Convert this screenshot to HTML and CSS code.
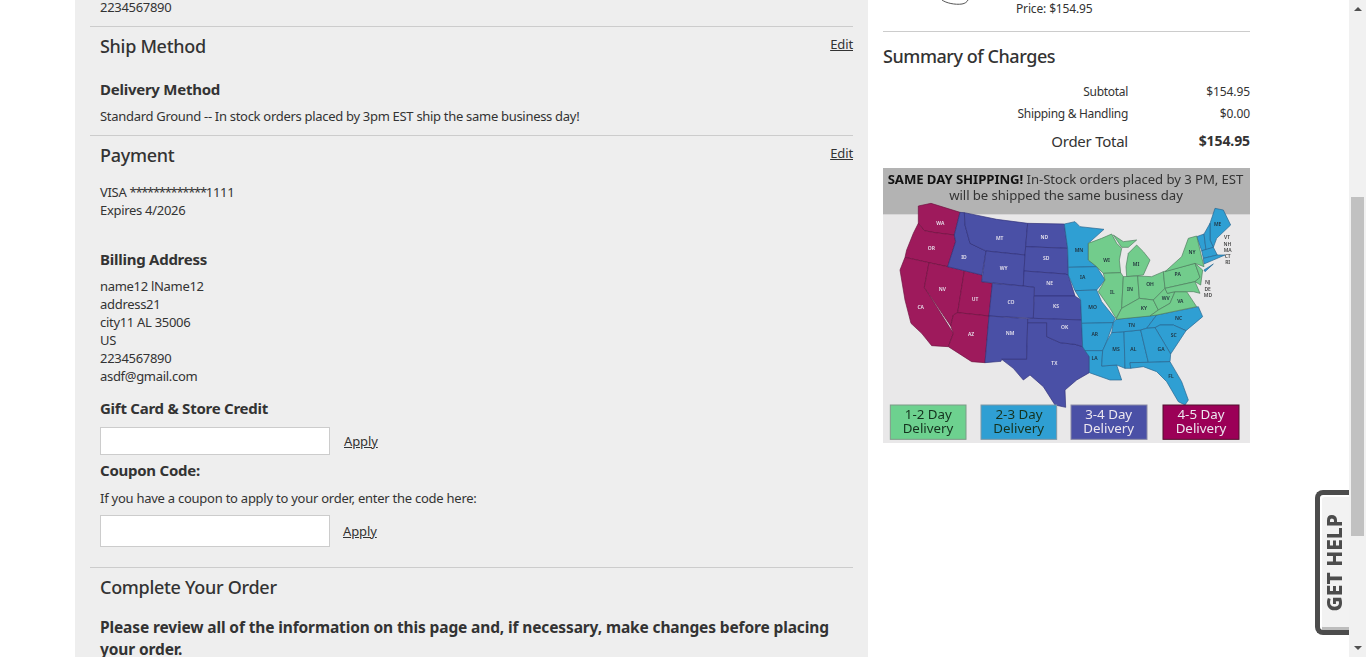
FILE: index.html
```html
<!DOCTYPE html>
<html lang="en">
<head>
<meta charset="utf-8">
<title>Checkout Review</title>
<link rel="stylesheet" href="styles.css">
</head>
<body>
<div class="page">
  <main class="panel">
    <section class="block block-first">
      <p class="line phone-cut">2234567890</p>
    </section>
    <section class="block">
      <div class="head"><h2>Ship Method</h2><a class="edit" href="#">Edit</a></div>
      <h3 class="sub-delivery">Delivery Method</h3>
      <p class="line ship-text">Standard Ground -- In stock orders placed by 3pm EST ship the same business day!</p>
    </section>
    <section class="block">
      <div class="head"><h2>Payment</h2><a class="edit" href="#">Edit</a></div>
      <div class="card-lines">
        <p class="line">VISA <span class="mask">*************</span>1111</p>
        <p class="line">Expires 4/2026</p>
      </div>
      <h3 class="sub-billing">Billing Address</h3>
      <div class="address">
        <p class="line">name12 lName12</p>
        <p class="line">address21</p>
        <p class="line">city11 AL 35006</p>
        <p class="line">US</p>
        <p class="line">2234567890</p>
        <p class="line">asdf@gmail.com</p>
      </div>
      <h3 class="sub-gift">Gift Card &amp; Store Credit</h3>
      <div class="apply-row row-gift"><input class="field" type="text" aria-label="Gift card"><a class="apply" href="#">Apply</a></div>
      <h3 class="sub-coupon">Coupon Code:</h3>
      <p class="line coupon-hint">If you have a coupon to apply to your order, enter the code here:</p>
      <div class="apply-row row-coupon"><input class="field field-tall" type="text" aria-label="Coupon code"><a class="apply" href="#">Apply</a></div>
    </section>
    <section class="block">
      <div class="head head-complete"><h2>Complete Your Order</h2></div>
      <p class="review">Please review all of the information on this page and, if necessary, make changes before placing your order.</p>
    </section>
  </main>

  <aside class="side">
    <div class="product-cut">
      <svg class="product-arc" width="30" height="6" viewBox="0 0 30 6"><path d="M1 0C5 3 14 5 21 4C24 3.500 26 2 27 0" fill="none" stroke="#555" stroke-width="1"/></svg>
      <p class="price">Price: $154.95</p>
    </div>
    <h2 class="summary-title">Summary of Charges</h2>
    <div class="charge"><span class="c-label">Subtotal</span><span class="c-val">$154.95</span></div>
    <div class="charge"><span class="c-label">Shipping &amp; Handling</span><span class="c-val">$0.00</span></div>
    <div class="charge total"><span class="c-label">Order Total</span><span class="c-val">$154.95</span></div>

    <svg class="map" viewBox="9 24 1101 825" width="367" height="275" role="img" aria-label="Same day shipping delivery map">
      <rect class="m-bg" x="9" y="24" width="1101" height="825"/>
      <rect class="m-band" x="9" y="24" width="1101" height="139"/>
      <text class="m-head" x="23" y="73"><tspan class="m-strong">SAME DAY SHIPPING!</tspan> In-Stock orders placed by 3 PM, EST</text>
      <text class="m-head" x="558" y="121" text-anchor="middle">will be shipped the same business day</text>

      <g class="s-red">
        <path d="M115 138L153 130L240 157L223 225L165 218L133 212L115 190Z"/>
        <path d="M115 190L133 212L165 218L223 225L227 245L203 320L147 308L75 292L80 270L100 220Z"/>
        <path d="M75 292L147 308L133 382L220 520L205 560L155 557L125 520L93 490L75 420L60 330Z"/>
        <path d="M147 308L203 320L253 332L233 458L220 465L212 498L133 382Z"/>
        <path d="M253 332L306 345L305 365L337 370L327 468L233 458Z"/>
        <path d="M233 458L327 468L315 608L275 605L205 560L220 520L212 498L220 465Z"/>
      </g>
      <g class="s-indigo">
        <path d="M240 157L253 158L255 195L270 250L318 273L306 345L253 332L203 320L227 245L223 225Z"/>
        <path d="M253 158L350 178L443 190L437 260L435 285L318 273L270 250L255 195Z"/>
        <path d="M318 273L435 285L430 378L305 365Z"/>
        <path d="M443 190L553 192L563 265L437 260Z"/>
        <path d="M437 260L563 265L565 345L555 342L432 333L435 285Z"/>
        <path d="M432 333L555 342L565 345L585 408L463 408L463 382L430 378Z"/>
        <path d="M337 370L430 378L463 382L460 475L327 468Z"/>
        <path d="M463 408L585 408L602 420L605 480L460 475Z"/>
        <path d="M327 468L443 476L440 598L365 598L363 604L315 608Z"/>
        <path d="M443 488L500 488L500 530L540 548L585 553L608 560L628 590L628 638L590 660L555 690L557 742L525 735L490 680L450 645L430 660L400 625L365 598L440 598Z"/>
        <path d="M443 476L460 475L605 480L608 560L585 553L540 548L500 530L500 488L443 488Z"/>
      </g>
      <g class="s-blue">
        <path d="M553 192L585 185L600 200L672 208L625 250L625 300L650 320L565 322L563 265Z"/>
        <path d="M565 322L650 320L675 360L650 390L585 392L565 345Z"/>
        <path d="M585 392L650 390L665 425L705 475L700 488L605 490L602 420Z"/>
        <path d="M605 490L700 488L680 545L668 572L615 572L608 560Z"/>
        <path d="M615 572L668 572L665 618L710 615L725 660L690 660L628 638L628 590Z"/>
        <path d="M695 518L732 515L735 625L710 615L665 618L668 572L680 545Z"/>
        <path d="M732 515L782 510L805 607L750 608L752 625L735 625Z"/>
        <path d="M700 488L708 478L830 465L800 505L782 510L732 515L695 518Z"/>
        <path d="M830 465L955 440L968 470L918 512L880 495L840 495L825 503L800 505Z"/>
        <path d="M825 503L840 495L880 495L918 512L872 582Z"/>
        <path d="M782 510L800 505L825 503L872 582L870 605L805 607Z"/>
        <path d="M750 608L805 607L870 605L905 665L925 720L915 735L895 725L860 665L830 635L790 620L752 625Z"/>
        <path d="M990 190L1005 145L1030 150L1052 195L1010 235L1000 262L990 240Z"/>
        <path d="M950 230L972 222L978 270L965 272Z"/>
        <path d="M972 222L990 190L990 240L1000 262L978 270Z"/>
        <path d="M965 272L1000 262L1012 285L970 295Z"/>
        <path d="M970 295L1012 285L1035 285L1000 300L972 312Z"/>
        <path d="M972 330L1000 312L975 335Z"/>
      </g>
      <g class="s-green">
        <path d="M625 250L665 235L695 222L710 250L725 265L718 300L722 338L670 340L650 320L625 300Z"/>
        <path d="M700 225L730 245L770 240L745 262L725 262Z"/>
        <path d="M738 320L745 280L770 255L790 275L810 300L790 345L740 350Z"/>
        <path d="M670 340L722 338L730 350L725 445L708 475L690 445L655 395L675 360Z"/>
        <path d="M730 350L773 348L778 415L725 445Z"/>
        <path d="M773 348L815 350L850 335L855 385L820 420L778 415Z"/>
        <path d="M708 478L725 445L778 415L820 420L835 450L810 468Z"/>
        <path d="M820 420L855 385L862 400L885 395L870 430L835 450Z"/>
        <path d="M810 468L835 450L870 430L885 395L920 395L950 440L830 465Z"/>
        <path d="M850 335L945 310L960 352L945 365L855 385Z"/>
        <path d="M855 335L905 290L925 235L950 228L972 320L945 310Z"/>
        <path d="M855 385L945 365L960 400L940 395L920 395L885 395L862 400Z"/>
        <path d="M945 310L968 330L962 375L945 365L960 352Z"/>
      </g>
      <g class="lbl-w">
        <text x="181" y="195">WA</text><text x="154" y="270">OR</text><text x="122" y="446">CA</text><text x="187" y="393">NV</text><text x="285" y="422">UT</text><text x="273" y="527">AZ</text>
        <text x="252" y="297">ID</text><text x="359" y="241">MT</text><text x="371" y="329">WY</text><text x="493" y="237">ND</text><text x="499" y="301">SD</text><text x="509" y="374">NE</text><text x="393" y="433">CO</text><text x="528" y="445">KS</text><text x="390" y="524">NM</text><text x="554" y="506">OK</text><text x="523" y="614">TX</text>
      </g>
      <g class="lbl-d">
        <text x="597" y="275">MN</text><text x="608" y="357">IA</text><text x="638" y="447">MO</text><text x="644" y="529">AR</text><text x="644" y="599">LA</text><text x="708" y="574">MS</text><text x="760" y="573">AL</text><text x="755" y="501">TN</text><text x="896" y="481">NC</text><text x="881" y="530">SC</text><text x="843" y="574">GA</text><text x="873" y="653">FL</text>
        <text x="680" y="305">WI</text><text x="768" y="317">MI</text><text x="697" y="401">IL</text><text x="750" y="392">IN</text><text x="810" y="379">OH</text><text x="792" y="450">KY</text><text x="857" y="419">WV</text><text x="901" y="429">VA</text><text x="893" y="349">PA</text><text x="936" y="282">NY</text><text x="1013" y="198">ME</text>
      </g>
      <g class="lbl-g">
        <text x="1041" y="237">VT</text><text x="1042" y="257">NH</text><text x="1043" y="276">MA</text><text x="1043" y="294">CT</text><text x="1043" y="313">RI</text><text x="983" y="373">NJ</text><text x="983" y="392">DE</text><text x="984" y="411">MD</text>
      </g>
      <rect class="leg leg-green" x="31" y="735" width="227" height="103"/>
      <rect class="leg leg-blue" x="303" y="735" width="227" height="103"/>
      <rect class="leg leg-indigo" x="573" y="735" width="228" height="103"/>
      <rect class="leg leg-red" x="849" y="735" width="228" height="103"/>
      <text class="leg-t t-dark" x="145" y="776">1-2 Day</text><text class="leg-t t-dark" x="144" y="820">Delivery</text>
      <text class="leg-t t-dark" x="417" y="776">2-3 Day</text><text class="leg-t t-dark" x="416" y="820">Delivery</text>
      <text class="leg-t t-light" x="686" y="776">3-4 Day</text><text class="leg-t t-light" x="686" y="820">Delivery</text>
      <text class="leg-t t-light" x="963" y="776">4-5 Day</text><text class="leg-t t-light" x="963" y="820">Delivery</text>
    </svg>
  </aside>
</div>

<a class="gethelp" href="#"><span>GET HELP</span></a>

<div class="scrollbar" aria-hidden="true">
  <span class="arrow arrow-up"></span>
  <div class="track"><div class="thumb"></div></div>
  <span class="arrow arrow-down"></span>
</div>
</body>
</html>
```

FILE: styles.css
```css
* { box-sizing: border-box; }
html, body { margin: 0; height: 657px; overflow: hidden; background: #fff; }
body { font-family: "Noto Sans", "Open Sans", sans-serif; color: #333; font-size: 13px; }
h2, h3, p { margin: 0; }
a { color: #333; }

.page { display: flex; align-items: flex-start; gap: 15px; padding-left: 75px; width: 1349px; height: 657px; overflow: hidden; }

.panel { width: 793px; flex: none; height: 657px; background: #eee; padding: 0 15px; }
.block { border-top: 1px solid #ccc; }
.block-first { border-top: 0; margin-top: -2px; height: 28px; }
.line { font-size: 13px; line-height: 18px; padding-left: 10px; letter-spacing: -0.3px; }
.mask { letter-spacing: -1.3px; }

.head { display: flex; justify-content: space-between; align-items: flex-start; padding-left: 10px; height: 40px; }
.head h2 { font-size: 18px; font-weight: 500; line-height: 24px; margin-top: 7px; letter-spacing: -0.3px; }
.edit { font-size: 13px; line-height: 18px; margin-top: 8px; letter-spacing: -0.1px; }

h3 { font-size: 15px; font-weight: 700; line-height: 20px; padding-left: 10px; letter-spacing: -0.25px; }
.sub-delivery { margin-top: 12px; }
.ship-text { margin-top: 8px; height: 28px; }
.card-lines { margin-top: 7px; }
.sub-billing { margin-top: 30px; }
.address { margin-top: 8px; }
.sub-gift { margin-top: 13px; }
.apply-row { display: flex; align-items: center; padding-left: 10px; }
.row-gift { margin-top: 9px; gap: 14px; }
.field { width: 230px; height: 28px; border: 1px solid #ccc; background: #fff; padding: 0; }
.field-tall { height: 32px; }
.apply { font-size: 13px; letter-spacing: -0.1px; }
.sub-coupon { margin-top: 5px; }
.coupon-hint { margin-top: 9px; letter-spacing: -0.25px; }
.row-coupon { margin-top: 8px; gap: 13px; padding-bottom: 20px; }
.head-complete { height: 39px; }
.review { font-size: 15.5px; font-weight: 700; line-height: 22px; padding-left: 10px; margin-top: 9px; width: 750px; letter-spacing: -0.13px; }

.side { width: 367px; flex: none; }
.product-cut { height: 32px; border-bottom: 1px solid #ccc; position: relative; }
.product-arc { position: absolute; left: 58px; top: 0; }
.price { font-size: 12px; line-height: 18px; padding-left: 133px; letter-spacing: -0.15px; }
.summary-title { font-size: 18px; font-weight: 500; line-height: 24px; margin-top: 12px; margin-bottom: 13px; letter-spacing: -0.45px; }
.charge { display: flex; justify-content: flex-end; font-size: 12px; line-height: 22px; }
.c-label { text-align: right; letter-spacing: -0.3px; margin-right: 2px; }
.c-val { width: 120px; text-align: right; letter-spacing: -0.1px; }
.total { font-size: 15px; line-height: 22px; margin-top: 5px; margin-bottom: 16px; }
.total .c-label { letter-spacing: -0.25px; }
.total .c-val { font-weight: 700; font-size: 14px; }

.map { display: block; filter: blur(0.35px); }
.m-bg { fill: #e9e8e9; }
.m-band { fill: #b3b3b3; }
.m-head { font-size: 39.5px; fill: #333; letter-spacing: -0.2px; }
.m-strong { font-weight: 700; fill: #111; }
.s-red path, .s-indigo path, .s-blue path, .s-green path { stroke-width: 2; stroke-linejoin: round; }
.s-red path { fill: #9e1a5c; stroke: #6e1040; }
.s-indigo path { fill: #4a50a6; stroke: #303078; }
.s-blue path { fill: #2f9fd3; stroke: #27648e; }
.s-green path { fill: #72cc8c; stroke: #4c7a5c; }
.lbl-w text, .lbl-d text, .lbl-g text { font-size: 15px; font-weight: 600; text-anchor: middle; }
.lbl-w text { fill: #e8e4ee; }
.lbl-d text { fill: #1f2f3a; }
.lbl-g text { fill: #444; }
.leg { stroke-width: 3; }
.leg-green { fill: #6dd18f; stroke: #7f9a88; }
.leg-blue { fill: #2f9fd3; stroke: #7f98a6; }
.leg-indigo { fill: #4a50a6; stroke: #8a8aa6; }
.leg-red { fill: #9b0057; stroke: #52102f; }
.leg-t { font-size: 40px; text-anchor: middle; }
.t-dark { fill: #15331f; }
.t-light { fill: #ece6ef; }

.gethelp { position: absolute; left: 1315px; top: 490px; width: 34px; height: 145px; background: #f2f2f2; border: 5px solid #4c4c4c; border-right: 0; border-radius: 8px 0 0 8px; display: flex; align-items: center; justify-content: center; text-decoration: none; box-shadow: inset 2px 2px 0 #fff, inset 0 -3px 0 #bdbdbd; }
.gethelp span { writing-mode: vertical-rl; transform: rotate(180deg); font-size: 21px; font-weight: 800; color: #4c4c4c; line-height: 1; }

.scrollbar { position: absolute; left: 1349px; top: 0; width: 17px; height: 657px; background: #f1f1f1; display: flex; flex-direction: column; align-items: center; }
.track { flex: 1; width: 100%; position: relative; }
.thumb { position: absolute; left: 2px; right: 2px; top: 180px; height: 339px; background: #c1c1c1; }
.arrow { flex: none; width: 0; border-left: 4px solid transparent; border-right: 4px solid transparent; }
.arrow-up { border-bottom: 4px solid #505050; height: 0; margin: 7px 0 6px; }
.arrow-down { border-top: 4px solid #505050; height: 0; margin: 6px 0 7px; }
```
